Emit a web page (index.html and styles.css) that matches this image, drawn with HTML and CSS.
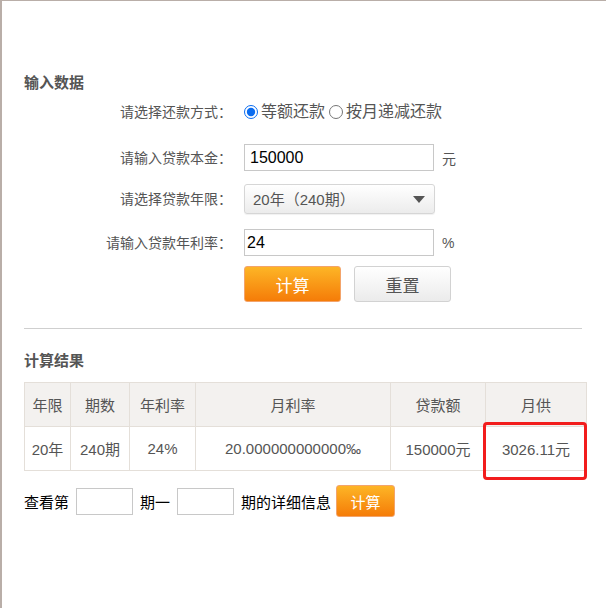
FILE: index.html
```html
<!DOCTYPE html>
<html lang="zh-CN">
<head>
    <meta charset="UTF-8">
    <title>房贷计算器</title>
    <link rel="stylesheet" href="styles.css">
</head>
<body>
    <div class="page">
        <h3 class="section-title first">输入数据</h3>

        <div class="form-row row-type">
            <label class="row-label">请选择还款方式：</label>
            <label class="radio"><input type="radio" name="type" checked>等额还款</label>
            <label class="radio"><input type="radio" name="type"> 按月递减还款</label>
        </div>

        <div class="form-row row-money">
            <label class="row-label" for="money">请输入贷款本金：</label>
            <input type="text" id="money" class="text-input" value="150000">
            <span class="unit">元</span>
        </div>

        <div class="form-row row-years">
            <label class="row-label" for="years">请选择贷款年限：</label>
            <div class="select-box">
                <select id="years">
                    <option>20年（240期）</option>
                </select>
                <span class="arrow"></span>
            </div>
        </div>

        <div class="form-row row-rate">
            <label class="row-label" for="rate">请输入贷款年利率：</label>
            <input type="text" id="rate" class="text-input" value="24">
            <span class="unit">%</span>
        </div>

        <div class="form-row row-buttons">
            <span class="row-label"></span>
            <button class="btn btn-orange">计算</button>
            <button class="btn btn-grey">重置</button>
        </div>

        <hr class="divider">

        <h3 class="section-title">计算结果</h3>

        <div class="result-wrap">
            <table class="result-table">
                <tr>
                    <th class="c1">年限</th>
                    <th class="c2">期数</th>
                    <th class="c3">年利率</th>
                    <th class="c4">月利率</th>
                    <th class="c5">贷款额</th>
                    <th class="c6">月供</th>
                </tr>
                <tr>
                    <td>20年</td>
                    <td>240期</td>
                    <td>24%</td>
                    <td>20.000000000000‰</td>
                    <td>150000元</td>
                    <td>3026.11元</td>
                </tr>
            </table>
            <div class="mark"></div>
        </div>

        <div class="detail-row">
            <span>查看第</span>
            <input type="text" class="small-input">
            <span>期一</span>
            <input type="text" class="small-input">
            <span>期的详细信息</span>
            <button class="btn-small">计算</button>
        </div>
    </div>
</body>
</html>
```

FILE: styles.css
```css
html, body {
    margin: 0;
    padding: 0;
    background: #fff;
}
body {
    font-family: "Liberation Sans", "Noto Sans CJK SC", sans-serif;
    font-size: 14px;
    color: #555;
}
.page {
    border-top: 1px solid #b9aea8;
    border-left: 2px solid #b9aea8;
    min-height: 608px;
    padding: 0 20px 0 22px;
    box-sizing: border-box;
}
.section-title {
    margin: 0;
    font-size: 15px;
    line-height: 20px;
    font-weight: bold;
    color: #555;
}
.section-title.first {
    padding-top: 72px;
}
.form-row {
    display: flex;
    align-items: center;
}
.row-label {
    width: 208px;
    margin-right: 12px;
    text-align: right;
    line-height: 20px;
}
.row-type { margin-top: 9px; height: 20px; }
.row-money { margin-top: 22px; }
.row-years { margin-top: 13px; }
.row-rate { margin-top: 15px; }
.row-buttons { margin-top: 10px; }

.radio {
    display: flex;
    align-items: center;
    font-size: 16px;
    line-height: 20px;
}
.radio input {
    width: 14px;
    height: 14px;
    margin: 0 3px 0 0;
    accent-color: #0a6cf0;
}
.radio + .radio input {
    margin-left: 4px;
}
.text-input {
    width: 190px;
    height: 27px;
    box-sizing: border-box;
    border: 1px solid #c8c8c8;
    padding: 0 5px;
    font-family: "Liberation Sans", sans-serif;
    font-size: 16px;
    color: #000;
    outline: none;
}
#rate { padding-left: 2px; }
.unit {
    margin-left: 8px;
}
.select-box {
    position: relative;
    width: 191px;
    height: 30px;
}
.select-box select {
    appearance: none;
    -webkit-appearance: none;
    width: 100%;
    height: 100%;
    border: 1px solid #d6d6d6;
    border-radius: 3px;
    background: linear-gradient(#ffffff, #ececec);
    padding: 0 0 0 8px;
    font-family: "Liberation Sans", "Noto Sans CJK SC", sans-serif;
    font-size: 15px;
    color: #555;
    box-shadow: 0 1px 1px rgba(0,0,0,0.06);
}
.arrow {
    position: absolute;
    right: 10px;
    top: 12px;
    width: 0;
    height: 0;
    border-left: 6px solid transparent;
    border-right: 6px solid transparent;
    border-top: 7px solid #555;
    pointer-events: none;
}
.btn {
    width: 97px;
    height: 36px;
    border-radius: 3px;
    font-family: "Liberation Sans", "Noto Sans CJK SC", sans-serif;
    font-size: 17px;
    padding: 0;
    cursor: pointer;
}
.btn-orange {
    border: 1px solid #f3a46b;
    background: linear-gradient(#fdb526, #f57c08);
    color: #fff;
}
.btn-grey {
    margin-left: 13px;
    border: 1px solid #d2d2d2;
    background: linear-gradient(#ffffff, #ebebeb);
    color: #555;
}
.divider {
    margin: 26px 4px 0 0;
    border: 0;
    border-top: 1px solid #cfcfcf;
}
.divider + .section-title {
    margin-top: 22px;
}
.result-wrap {
    position: relative;
    margin-top: 11px;
}
.result-table {
    border-collapse: collapse;
    width: 562px;
    table-layout: fixed;
    font-size: 15px;
}
.result-table th,
.result-table td {
    border: 1px solid #e4dfd9;
    height: 43px;
    padding: 0;
    text-align: center;
    font-weight: normal;
    color: #555;
}
.result-table th {
    background: #f3f1ef;
}
.c1 { width: 45px; }
.c2 { width: 58px; }
.c3 { width: 65px; }
.c4 { width: 194px; }
.c5 { width: 94px; }
.c6 { width: 100px; }
.mark {
    position: absolute;
    left: 459px;
    top: 40px;
    width: 104px;
    height: 58px;
    box-sizing: border-box;
    border: 3px solid #f21d1d;
    border-radius: 4px;
}
.detail-row {
    display: flex;
    align-items: center;
    margin-top: 14px;
    height: 32px;
    font-size: 15px;
    color: #000;
}
.small-input {
    width: 57px;
    height: 27px;
    box-sizing: border-box;
    border: 1px solid #c8c8c8;
    margin: 0 7px;
    outline: none;
}
.btn-small {
    margin-left: 5px;
    width: 59px;
    height: 32px;
    border: 1px solid #f3a46b;
    border-radius: 3px;
    background: linear-gradient(#fdb526, #f57c08);
    color: #fff;
    font-family: "Liberation Sans", "Noto Sans CJK SC", sans-serif;
    font-size: 15px;
    padding: 0;
}
```
